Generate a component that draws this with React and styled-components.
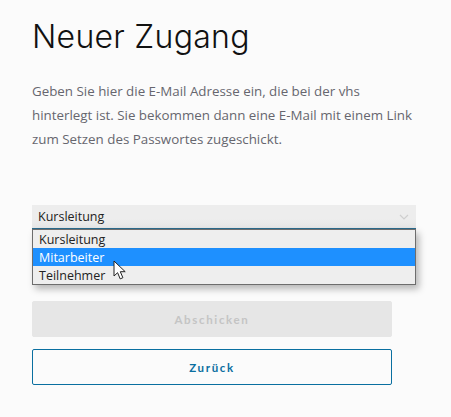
import React from "react";
import styled, { createGlobalStyle } from "styled-components";

const Global = createGlobalStyle`
  html, body { margin: 0; padding: 0; background: #fbfbfb; }
  #root { width: 451px; height: 417px; overflow: hidden; }
`;

const Page = styled.main`
  box-sizing: border-box;
  width: 451px;
  height: 417px;
  padding: 18px 0 0 32px;
  font-family: "Open Sans", "Noto Sans", sans-serif;
  display: flex;
  flex-direction: column;
`;

const Title = styled.h1`
  margin: 0;
  font-family: Inter, "Open Sans", sans-serif;
  font-weight: 300;
  font-size: 32px;
  line-height: 38px;
  letter-spacing: 0.27px;
  color: #111;
`;

const Intro = styled.p`
  margin: 23px 0 0;
  width: 384px;
  font-size: 13.35px;
  line-height: 24px;
  color: #66666e;
`;

const SelectWrap = styled.div`
  position: relative;
  margin-top: 54px;
  width: 384px;
`;

const SelectBox = styled.div`
  box-sizing: border-box;
  height: 24px;
  padding: 0 7px 0 6px;
  display: flex;
  align-items: center;
  justify-content: space-between;
  background: linear-gradient(#ededed 60%, #e6e6e6);
  border-bottom: 1px solid #2c6c8e;
  font-size: 12.5px;
  color: #222;
`;

const Chevron = styled.svg`
  width: 10px;
  height: 6px;
  fill: none;
  stroke: #cfcfcf;
  stroke-width: 1.2;
`;

const Menu = styled.ul`
  position: absolute;
  left: 0;
  top: 24px;
  box-sizing: border-box;
  width: 384px;
  height: 56px;
  margin: 0;
  padding: 0;
  list-style: none;
  background: #eeeeee;
  border: 1px solid #6d6d6d;
  box-shadow: 3px 4px 7px rgba(0, 0, 0, 0.28);
  font-size: 12.5px;
`;

const Option = styled.li`
  height: 18px;
  line-height: 20px;
  padding-left: 6px;
  background: ${(p) => (p.$active ? "#1e90ff" : "transparent")};
  color: ${(p) => (p.$active ? "#fff" : "#222")};
`;

const Cursor = styled.svg`
  position: absolute;
  left: 81px;
  top: 55px;
  width: 14px;
  height: 21px;
`;

const Actions = styled.div`
  margin-top: 72px;
  width: 360px;
  display: flex;
  flex-direction: column;
  gap: 12px;
`;

const Button = styled.button`
  box-sizing: border-box;
  width: 360px;
  height: 36px;
  padding: 1px 0 0;
  border-radius: 2px;
  font-family: Lato, "Open Sans", sans-serif;
  font-weight: 700;
  font-size: 11.5px;
  letter-spacing: 1.65px;
  border: 1px solid ${(p) => (p.$primary ? "#e6e6e6" : "#0a6fa0")};
  background: ${(p) => (p.$primary ? "#e6e6e6" : "#fbfbfb")};
  color: ${(p) => (p.$primary ? "#c4c4c4" : "#0a6fa0")};
`;

export default function App() {
  return (
    <Page>
      <Global />
      <Title>Neuer Zugang</Title>
      <Intro>
        Geben Sie hier die E-Mail Adresse ein, die bei der vhs hinterlegt ist. Sie bekommen dann eine E-Mail mit einem Link zum Setzen des Passwortes zugeschickt.
      </Intro>
      <SelectWrap>
        <SelectBox>
          Kursleitung
          <Chevron viewBox="0 0 10 6"><path d="M1 1l4 4 4-4" /></Chevron>
        </SelectBox>
        <Menu>
          <Option>Kursleitung</Option>
          <Option $active>Mitarbeiter</Option>
          <Option>Teilnehmer</Option>
        </Menu>
        <Cursor viewBox="0 0 14 21">
          <path d="M1 1v15l3.6-3.3 2.6 6.2 2.7-1.2-2.6-6h4.9z" fill="#fff" stroke="#222" strokeWidth="1" strokeLinejoin="round" />
        </Cursor>
      </SelectWrap>
      <Actions>
        <Button $primary disabled>Abschicken</Button>
        <Button>Zurück</Button>
      </Actions>
    </Page>
  );
}
